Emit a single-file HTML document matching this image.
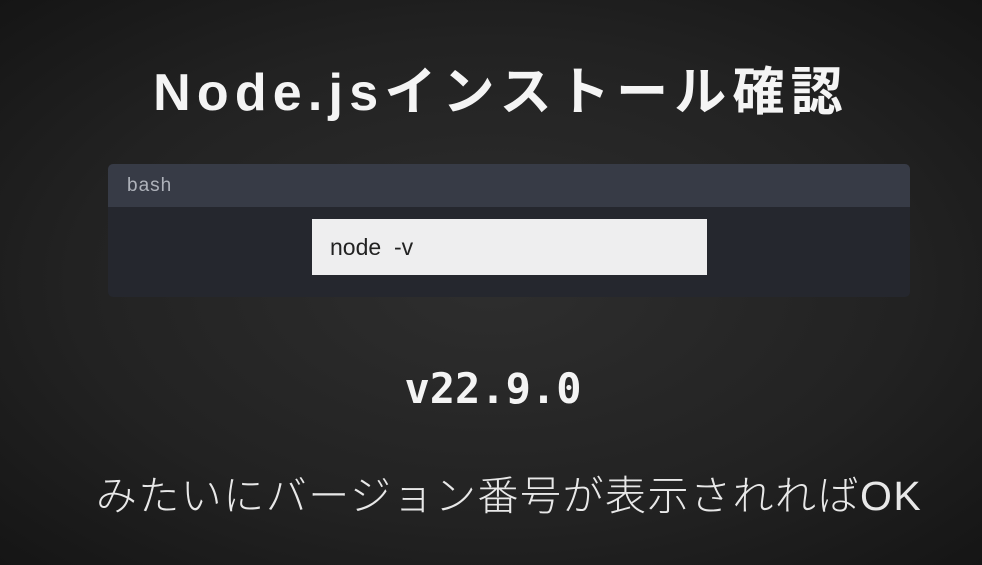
<!DOCTYPE html>
<html><head><meta charset="utf-8"><style>
body{margin:0;width:982px;height:565px;overflow:hidden;background:radial-gradient(ellipse at 50% 50%,#2e2e2e 0%,#222 60%,#151515 100%);font-family:"Liberation Sans","Noto Sans CJK JP",sans-serif;position:relative;color:#f4f4f4}
.t{position:absolute;left:0;width:982px;text-align:center;white-space:nowrap}
.card{position:absolute;left:108px;top:164px;width:802px;height:133px;background:#25272e;border-radius:5px;overflow:hidden}
.hd{height:43px;background:#373b46;color:#aeb2ba;font-size:19px;line-height:43px;padding-left:19px;letter-spacing:1px}
.inp{position:absolute;left:204px;top:55px;width:395px;height:56px;background:#eeeeef;color:#222;font-size:23px;line-height:56px;padding-left:18px;box-sizing:border-box}
</style></head><body>
<div class="t" style="top:50px;font-size:52px;font-weight:bold;letter-spacing:6.2px;left:10px">Node.jsインストール確認</div>
<div class="card"><div class="hd">bash</div><div class="inp">node&nbsp; -v</div></div>
<div class="t" style="top:364px;font-size:42px;font-weight:bold;font-family:'DejaVu Sans Mono','Liberation Mono',monospace;left:2px">v22.9.0</div>
<div class="t" style="top:462px;font-size:41px;font-weight:300;color:#e8e8e8;left:18px;letter-spacing:1.5px">みたいにバージョン番号が表示されればOK</div>
</body></html>
